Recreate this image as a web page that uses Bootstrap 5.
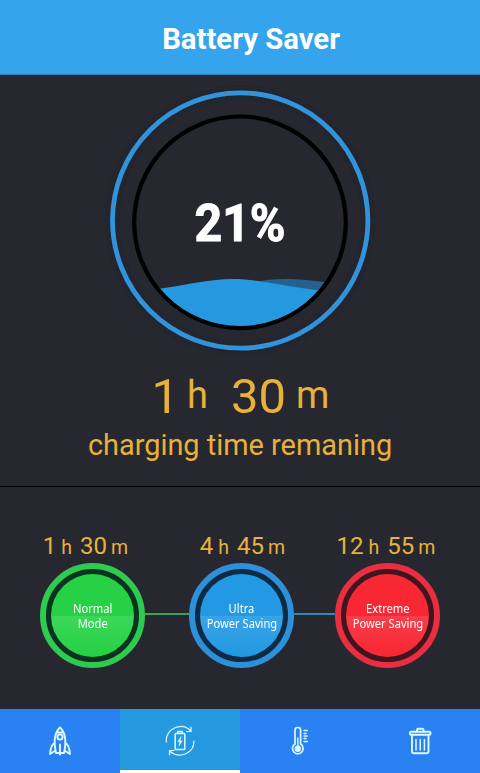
<!DOCTYPE html>
<html lang="en">
<head>
<meta charset="utf-8">
<meta name="viewport" content="width=device-width, initial-scale=1">
<title>Battery Saver</title>
<link href="https://cdn.jsdelivr.net/npm/bootstrap@5.3.0/dist/css/bootstrap.min.css" rel="stylesheet">
<style>
body{background:#27282f;font-family:Roboto,sans-serif;width:480px;height:773px;overflow:hidden}
.app-bar{background:#36a4ec;height:75px;padding:4px 0 0 22px;border-bottom:1px solid #3181b8}
.app-title{font-size:29.3px;line-height:34px;color:#fff}
.status{height:412px;border-bottom:1px solid #000}
.gauge{width:280px;height:280px;margin-top:5px}
.amber{color:#e8b13a}
.time-big{font-size:49px;line-height:56px;margin-top:9px;padding-left:1px}
.time-big small{font-size:38px;position:relative;top:-5px}
.gap-h{margin-left:8px}
.gap-min{margin-left:23px}
.gap-m{margin-left:10px}
.caption{font-size:28.900px;line-height:34px;margin-top:0}
.modes{height:222px;padding:45px 40px 0}
.mode-item{width:105px}
.time-sm{font-size:24px;line-height:28px;height:31px}
.time-sm small{font-size:19.500px;margin-left:4px}
.time-sm small:first-child{margin-left:5px}
.time-sm span{margin-left:8px}
.time-normal{margin-left:-14px}
.time-ultra{margin-left:2px}
.time-extreme{margin-left:-3px}
.dial{width:105px;height:105px;border:6px solid var(--ring);background:var(--gap);padding:5px}
.dial-face{background:linear-gradient(var(--fill) 50%,var(--shine) 50%,var(--fill) 96%);font:11.700px/15px "Noto Sans",sans-serif;color:#fff}
.dial-face span{transform:scaleX(.955)}
.dial-green{--ring:#2fcb50;--gap:#0c3320;--fill:#26d145;--shine:#3cd75a}
.dial-blue{--ring:#2e90d8;--gap:#0e2a45;--fill:#2299e2;--shine:#3aa4e5}
.dial-red{--ring:#e92f3f;--gap:#3f151f;--fill:#f72734;--shine:#f73f4b}
.link-line{height:2px;margin-top:81px}
.line-green{width:44px;background:#35a653}
.line-blue{width:41px;background:#3585bd}
.tabs{background:#2a82f2;height:64px}
.tab-on{background:#2499e0;border-bottom:3px solid #fff}
.tabs svg{fill:none;stroke:#dcfaff;stroke-width:1.900;stroke-linecap:round;stroke-linejoin:round}
</style>
</head>
<body class="d-flex flex-column">
<header class="app-bar d-flex align-items-center justify-content-center flex-shrink-0"><h1 class="app-title fw-bold m-0">Battery Saver</h1></header>
<main class="flex-shrink-0">
<section class="status d-flex flex-column align-items-center">
<svg class="gauge flex-shrink-0" viewBox="100 80 280 280">
<defs><clipPath id="tank"><circle cx="240" cy="222.3" r="104.5"/></clipPath><filter id="glow" x="-10%" y="-10%" width="120%" height="120%"><feGaussianBlur stdDeviation="2"/></filter></defs>
<circle cx="240.2" cy="220.5" r="128" fill="none" stroke="#1b232e" stroke-width="7" filter="url(#glow)"/>
<circle cx="240.2" cy="220.5" r="127.7" fill="none" stroke="#3293da" stroke-width="4.800"/>
<g clip-path="url(#tank)"><path d="M255 282C275 278 297 278 330 283V295H255Z" fill="#25618e"/><path d="M155 289.500C180 286 208 279 233 279S286 287 322 290.500V335H155Z" fill="#2499e0"/></g>
<circle cx="240" cy="222.300" r="105.800" fill="none" stroke="#000" stroke-width="4.200"/>
<text x="240" y="240.500" text-anchor="middle" font-family="Roboto,sans-serif" font-weight="700" font-size="52" textLength="91" lengthAdjust="spacingAndGlyphs" fill="#fff" stroke="#fff" stroke-width="1">21%</text>
</svg>
<div class="time-big amber text-nowrap">1<small class="gap-h">h</small><span class="gap-min">30</span><small class="gap-m">m</small></div>
<div class="caption amber text-nowrap">charging time remaning</div>
</section>
<section class="modes d-flex">
<div class="mode-item d-flex flex-column align-items-center flex-shrink-0">
<div class="time-sm time-normal amber text-nowrap">1<small>h</small><span>30</span><small>m</small></div>
<div class="dial dial-green rounded-circle"><div class="dial-face rounded-circle w-100 h-100 d-flex flex-column align-items-center justify-content-center text-nowrap"><span>Normal</span><span>Mode</span></div></div>
</div>
<div class="link-line line-green flex-shrink-0"></div>
<div class="mode-item d-flex flex-column align-items-center flex-shrink-0">
<div class="time-sm time-ultra amber text-nowrap">4<small>h</small><span>45</span><small>m</small></div>
<div class="dial dial-blue rounded-circle"><div class="dial-face rounded-circle w-100 h-100 d-flex flex-column align-items-center justify-content-center text-nowrap"><span>Ultra</span><span>Power Saving</span></div></div>
</div>
<div class="link-line line-blue flex-shrink-0"></div>
<div class="mode-item d-flex flex-column align-items-center flex-shrink-0">
<div class="time-sm time-extreme amber text-nowrap">12<small>h</small><span>55</span><small>m</small></div>
<div class="dial dial-red rounded-circle"><div class="dial-face rounded-circle w-100 h-100 d-flex flex-column align-items-center justify-content-center text-nowrap"><span>Extreme</span><span>Power Saving</span></div></div>
</div>
</section>
</main>
<nav class="tabs d-flex flex-shrink-0">
<a href="#" class="w-25 d-flex justify-content-center pt-3" aria-label="Boost"><svg width="32" height="32" viewBox="44 725 32 32"><path d="M56 753C54 744 54 733 60 727.500C66 733 66 744 64 753ZM56.500 732.500H63.500M54.800 742.500C51 745 50.300 749 50.100 754L55.500 750.500M65.200 742.500C69 745 69.700 749 69.900 754L64.500 750.500M60 744.500V754.500"/><circle cx="60" cy="737" r="2.600"/></svg></a>
<a href="#" class="tab-on w-25 d-flex justify-content-center pt-3" aria-label="Battery"><svg width="32" height="32" viewBox="164 725 32 32"><g stroke-width="1.200"><path d="M166.300 742C165.500 729 181 721.500 190.500 730.500M191 727V731.500H186.500M193.900 741C194.200 753 180 759.500 170 751.500M169.500 755V750.500H174"/></g><path stroke-width="1.500" d="M176 733.500H184Q184.800 733.500 184.800 734.300V748.700Q184.800 749.500 184 749.500H176Q175.200 749.500 175.200 748.700V734.300Q175.200 733.500 176 733.500ZM177.800 733V731.500H182.200V733"/><path stroke-width=".5" fill="#dcfaff" d="M181 736.800L177.800 741.700H179.800L179 746L182.200 741H180.300Z"/></svg></a>
<a href="#" class="w-25 d-flex justify-content-center pt-3" aria-label="Temperature"><svg width="32" height="32" viewBox="284 725 32 32"><path stroke-width="1.700" d="M295 744V730Q295 727.500 297.800 727.500T300.600 730V744A5.300 5.300 0 1 1 295 744Z"/><path stroke-width="1.400" d="M297.800 738V746M304 730.500H307.300M304 733.500H306M304 736H307.300M304 738.500H306M304 741.500H307.300"/><circle cx="297.800" cy="748.800" r="3.200" fill="#dcfaff" stroke="none"/></svg></a>
<a href="#" class="w-25 d-flex justify-content-center pt-3" aria-label="Clean"><svg width="32" height="32" viewBox="404 725 32 32"><rect x="410" y="731.700" width="20.500" height="3" rx="1"/><path d="M417 731V729.800Q417 728.800 418 728.800H422.500Q423.500 728.800 423.500 729.800V731M412 735.500V751.500Q412 753.300 414 753.300H426.500Q428.500 753.300 428.500 751.500V735.500"/><path stroke-width="1.500" d="M416 739.500V750M420.200 739.500V750M424.400 739.500V750"/></svg></a>
</nav>
<script src="https://cdn.jsdelivr.net/npm/bootstrap@5.3.0/dist/js/bootstrap.bundle.min.js"></script>
</body>
</html>
